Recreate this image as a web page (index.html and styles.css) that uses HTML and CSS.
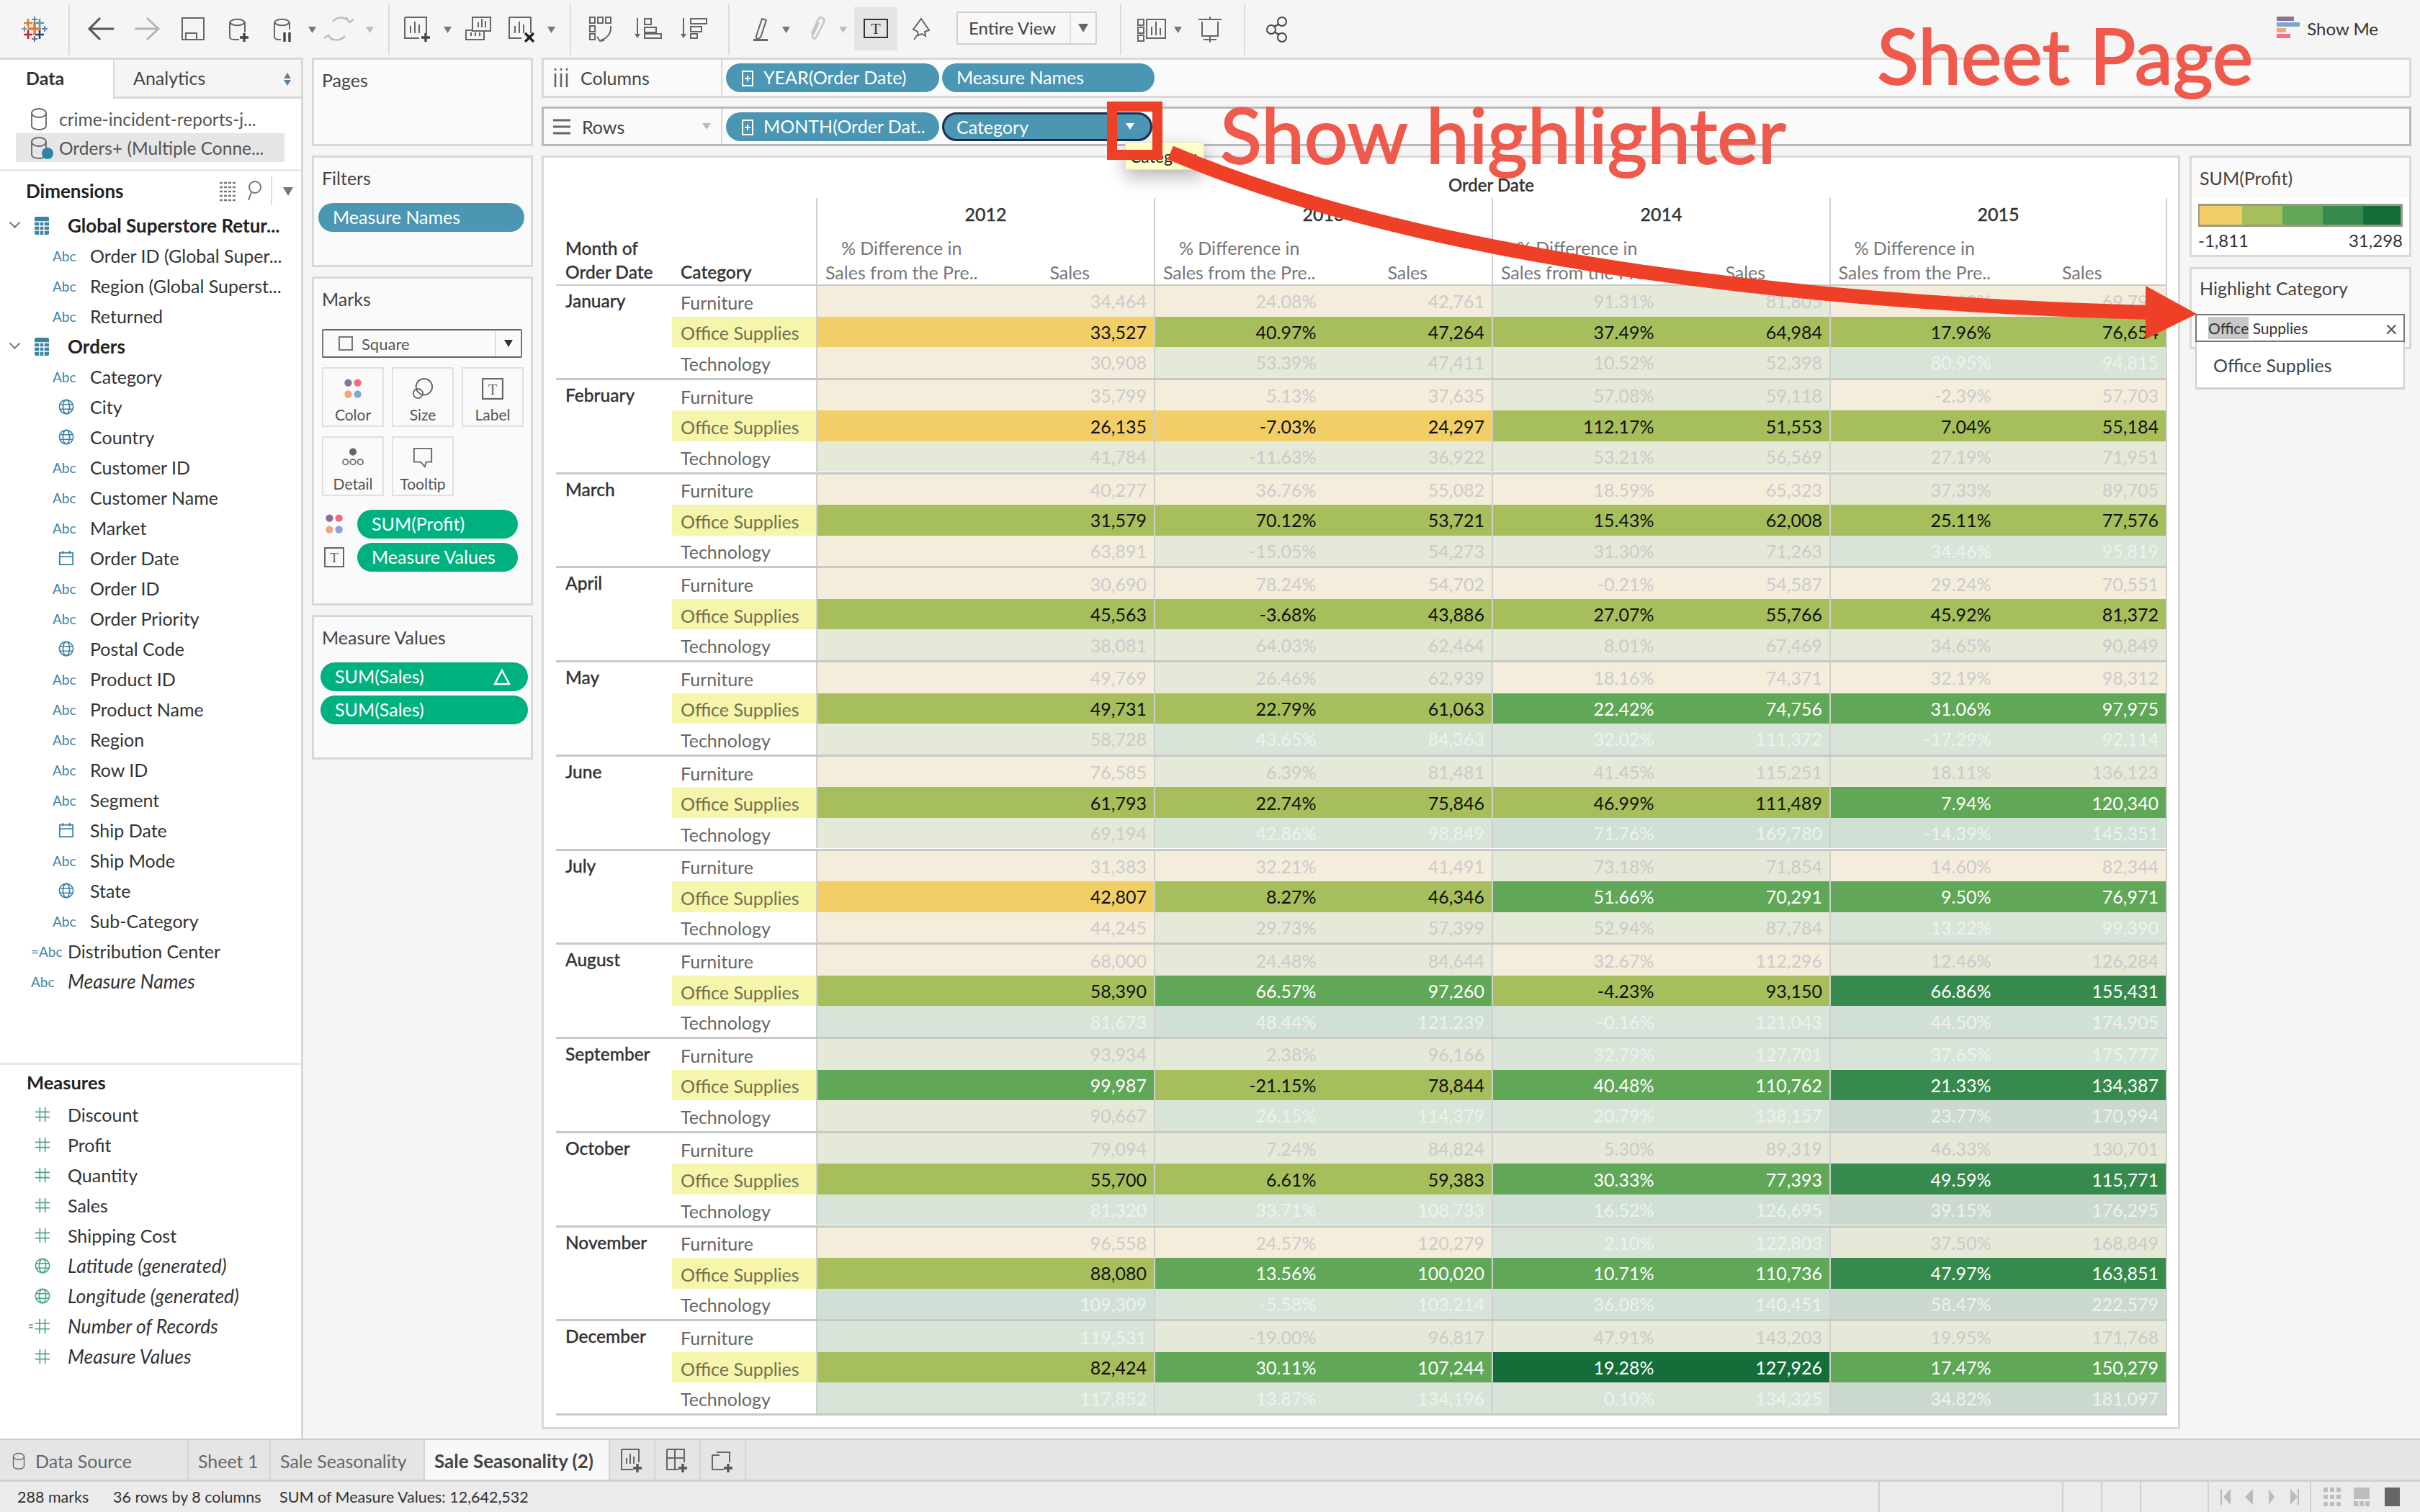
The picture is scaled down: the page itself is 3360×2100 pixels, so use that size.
FILE: index.html
```html
<!DOCTYPE html>
<html lang="en">
<head>
<meta charset="utf-8">
<title>Sale Seasonality (2)</title>
<link rel="stylesheet" href="styles.css">
</head>
<body>
<svg class="defs" width="0" height="0">
  <symbol id="globe" viewBox="0 0 24 24"><g fill="none" stroke="currentColor" stroke-width="1.8"><circle cx="12" cy="12" r="10.5"/><ellipse cx="12" cy="12" rx="5" ry="10.5"/><path d="M2 8.5h20M2 15.5h20"/></g></symbol>
  <symbol id="cal" viewBox="0 0 24 24"><g fill="none" stroke="currentColor" stroke-width="2"><rect x="2" y="4" width="20" height="18"/><path d="M2 10h20M7 1v5M17 1v5"/></g></symbol>
  <symbol id="hash" viewBox="0 0 24 24"><path fill="none" stroke="currentColor" stroke-width="1.8" d="M8 1v22M16 1v22M1 8h22M1 16h22"/></symbol>
  <symbol id="hashm" viewBox="0 0 32 24"><path fill="none" stroke="currentColor" stroke-width="1.8" d="M16 1v22M24 1v22M9 8h22M9 16h22"/><path fill="none" stroke="currentColor" stroke-width="2" d="M0 10h6M0 14h6"/></symbol>
  <symbol id="table" viewBox="0 0 20 26"><path fill="currentColor" d="M0 3a2 2 0 0 1 2-2h16a2 2 0 0 1 2 2v21a2 2 0 0 1-2 2H2a2 2 0 0 1-2-2z"/><path fill="none" stroke="#fff" stroke-width="1.5" d="M0 8h20M0 14h20M0 20h20M7 8v18M13 8v18"/></symbol>
  <symbol id="cyl" viewBox="0 0 24 32"><g fill="none" stroke="#666" stroke-width="1.8"><path d="M2 8a10 6 0 0 1 20 0v18a10 5 0 0 1-20 0z"/><path d="M2 8a10 6 0 0 0 20 0"/></g></symbol>
  <symbol id="dots" viewBox="0 0 26 32"><circle cx="6" cy="7" r="5.5" fill="#8a7198"/><circle cx="20" cy="7" r="5.5" fill="#f4697f"/><circle cx="6" cy="24" r="5.5" fill="#f1a67a"/><circle cx="20" cy="24" r="5.5" fill="#86a8d0"/></symbol>
</svg>

<div class="app">
  <header class="toolbar">
    <svg class="tb" width="95" height="80" viewBox="0 0 95 80">
      <g fill="none" stroke-width="2.6">
        <path stroke="#e8762c" stroke-width="3.4" d="M48 31v18M39 40h18"/>
        <path stroke="#e8762c" d="M39 26v12M33 32h12"/>
        <path stroke="#5b9aa8" d="M55 26v12M49 32h12"/>
        <path stroke="#c72035" d="M39 42v12M33 48h12"/>
        <path stroke="#1f447a" d="M55 42v12M49 48h12"/>
        <path stroke="#59879b" stroke-width="2" d="M48 23v8M44 27h8"/>
        <path stroke="#5b6f9a" stroke-width="2" d="M48 50v8M44 54h8"/>
        <path stroke="#7099a6" stroke-width="2" d="M34 36v8M30 40h8"/>
        <path stroke="#5a7fb0" stroke-width="2" d="M62 36v8M58 40h8"/>
      </g>
    </svg>
    <i class="sep"></i>
    <svg class="tb" width="442" height="80" viewBox="97 0 442 80">
      <path fill="none" stroke="#555" stroke-width="3" d="M139 25 124 40l15 15M126 40h32"/>
      <path fill="none" stroke="#b5b5b5" stroke-width="3" d="M204 25l16 15-16 15M187 40h32"/>
      <g fill="none" stroke="#666" stroke-width="2">
        <path d="M253 25h30v30h-30zM258 55v-9h15v9"/>
        <path d="M319 31a11 6 0 0 1 21 0v14M319 31a11 6 0 0 0 21 0M319 31v20a5 4 0 0 0 5 4h8"/>
        <path d="M381 31a11 6 0 0 1 21 0v10M381 31a11 6 0 0 0 21 0M381 31v20a5 4 0 0 0 5 4h4"/>
      </g>
      <path fill="none" stroke="#444" stroke-width="3.4" d="M339 46v12M333 52h12M395 45v13M402 45v13"/>
      <path fill="#777" d="M428 37h11l-5.500 9z"/>
      <g fill="none" stroke="#bdbdbd" stroke-width="2.400">
        <path d="M462 30a15 15 0 0 1 20-3l3 4M480 24l5 7 6-4M479 50a15 15 0 0 1-20 3l-3-4M461 56l-5-7-6 4"/>
      </g>
      <path fill="#bdbdbd" d="M508 37h11l-5.500 9z"/>
    </svg>
    <i class="sep"></i>
    <svg class="tb" width="250" height="80" viewBox="541 0 250 80">
      <g fill="none" stroke="#666" stroke-width="2">
        <path d="M562 24h30v22M582 53h-20V24M570 46V36M576 46V30M582 46V34"/>
        <path d="M656 24h25v19h-25zM664 38v-7M669 38V26M674 38v-9M656 42h-9v13h25v-12M654 50v-5M660 50v-5M666 50v-5"/>
        <path d="M707 24h30v22M724 53h-17V24M715 46V36M721 46V30M727 46V34"/>
      </g>
      <path fill="none" stroke="#444" stroke-width="3.400" d="M591 46v12M585 52h12"/>
      <path fill="none" stroke="#222" stroke-width="3.400" d="M729 46l12 12M741 46l-12 12"/>
      <path fill="#777" d="M616 37h11l-5.500 9zM760 37h11l-5.500 9z"/>
    </svg>
    <i class="sep"></i>
    <svg class="tb" width="218" height="80" viewBox="793 0 218 80">
      <g fill="none" stroke="#666" stroke-width="2">
        <path d="M819 24h7v8h-7zM830 24h7v8h-7zM841 24h7v8h-7zM819 36h7v8h-7zM819 47h7v8h-7zM848 36c1 9-4 17-14 20M829 51l4 6 6-1"/>
        <path d="M895 26h9v8h-9zM895 38h16v7h-16zM895 47h23v6h-23zM885 25v25"/>
        <path d="M959 26h22v7h-22zM959 37h15v7h-15zM959 47h9v6h-9zM949 25v25"/>
      </g>
      <path fill="#666" d="M881 47h8l-4 6zM945 47h8l-4 6z"/>
    </svg>
    <i class="sep"></i>
    <svg class="tb" width="315" height="80" viewBox="1013 0 315 80">
      <path fill="none" stroke="#666" stroke-width="2" d="M1050 50l8-24 6 2-8 24-6 3z"/>
      <path fill="#666" d="M1046 54h20v3h-20z"/>
      <path fill="#777" d="M1086 37h11l-5.500 9z"/>
      <path fill="none" stroke="#c4c4c4" stroke-width="2.400" d="M1127 47l9-20c3-5 10-2 8 4l-11 21c-2 3-6 1-5-2l9-19"/>
      <path fill="#bdbdbd" d="M1165 37h11l-5.500 9z"/>
      <rect x="1186" y="10" width="60" height="60" fill="#e5e5e5"/>
      <rect x="1200" y="27" width="32" height="25" fill="none" stroke="#333" stroke-width="2"/>
      <text x="1216" y="47" text-anchor="middle" font-family="Liberation Serif, serif" font-size="22" fill="#333">T</text>
      <path fill="none" stroke="#666" stroke-width="2" d="M1279 26l11 16-6 2 1 6-5-3-5 2-1-5-6-3zM1275 47l-6 8"/>
    </svg>
    <div class="fit"><span class="fit-l">Entire View</span><span class="fit-r"><i class="tri"></i></span></div>
    <i class="sep sep-fit"></i>
    <svg class="tb" width="170" height="80" viewBox="1557 0 170 80">
      <g fill="none" stroke="#666" stroke-width="2">
        <path d="M1580 27h8v8h-8zM1580 38h8v8h-8zM1580 49h8v8h-8zM1592 27h26v26h-26zM1599 49V37M1605 49V30M1611 49V39"/>
        <path d="M1664 27h32M1669 30v20h22V30M1680 50v9M1671 55h18M1680 23v4"/>
      </g>
      <path fill="#777" d="M1630 37h11l-5.500 9z"/>
    </svg>
    <i class="sep"></i>
    <svg class="tb" width="70" height="80" viewBox="1729 0 70 80">
      <g fill="none" stroke="#444" stroke-width="2"><circle cx="1780" cy="30" r="6"/><circle cx="1765" cy="41" r="6"/><circle cx="1780" cy="52" r="6"/><path d="M1775 34l-6 3M1770 45l6 3"/></g>
    </svg>
    <div class="showme">
      <svg width="32" height="32" viewBox="0 0 32 32"><path fill="#8a7198" d="M0 0h24v6H0z"/><path fill="#7fa5cc" d="M0 8h32v6H0z"/><path fill="#f1a67a" d="M0 16h13v6H0z"/><path fill="#f4718a" d="M0 24h19v6H0z"/></svg>
      <span>Show Me</span>
    </div>
  </header>

  <main class="main">
    <aside class="side">
      <div class="tabs2">
        <div class="tab2 on">Data</div>
        <div class="tab2 off">Analytics<i class="updown"></i></div>
      </div>
      <div class="sources">
        <div class="src"><svg class="cy"><use href="#cyl"/></svg>crime-incident-reports-j...</div>
        <div class="src cur"><svg class="cy"><use href="#cyl"/></svg><i class="check"></i>Orders+ (Multiple Conne...</div>
      </div>
      <div class="dims">
        <div class="dims-h">
          <b>Dimensions</b>
          <svg class="dh" width="104" height="40" viewBox="0 0 104 40">
            <path fill="none" stroke="#777" stroke-width="2.500" stroke-dasharray="4 2" d="M1 9h24M1 15h24M1 21h24M1 27h24M1 33h24"/>
            <g fill="none" stroke="#777" stroke-width="2"><circle cx="50" cy="15" r="8"/><path d="M45 22l-4 11"/></g>
            <path stroke="#ddd" stroke-width="2" d="M73 0v40"/>
            <path fill="#777" d="M89 15h14l-7 12z"/>
          </svg>
        </div>
        <div class="g"><i class="chev"></i><svg class="ti"><use href="#table"/></svg><b>Global Superstore Retur...</b></div>
        <div class="f"><span class="abc">Abc</span>Order ID (Global Super...</div>
        <div class="f"><span class="abc">Abc</span>Region (Global Superst...</div>
        <div class="f"><span class="abc">Abc</span>Returned</div>
        <div class="g"><i class="chev"></i><svg class="ti"><use href="#table"/></svg><b>Orders</b></div>
        <div class="f"><span class="abc">Abc</span>Category</div>
        <div class="f"><svg class="gl"><use href="#globe"/></svg>City</div>
        <div class="f"><svg class="gl"><use href="#globe"/></svg>Country</div>
        <div class="f"><span class="abc">Abc</span>Customer ID</div>
        <div class="f"><span class="abc">Abc</span>Customer Name</div>
        <div class="f"><span class="abc">Abc</span>Market</div>
        <div class="f"><svg class="gl"><use href="#cal"/></svg>Order Date</div>
        <div class="f"><span class="abc">Abc</span>Order ID</div>
        <div class="f"><span class="abc">Abc</span>Order Priority</div>
        <div class="f"><svg class="gl"><use href="#globe"/></svg>Postal Code</div>
        <div class="f"><span class="abc">Abc</span>Product ID</div>
        <div class="f"><span class="abc">Abc</span>Product Name</div>
        <div class="f"><span class="abc">Abc</span>Region</div>
        <div class="f"><span class="abc">Abc</span>Row ID</div>
        <div class="f"><span class="abc">Abc</span>Segment</div>
        <div class="f"><svg class="gl"><use href="#cal"/></svg>Ship Date</div>
        <div class="f"><span class="abc">Abc</span>Ship Mode</div>
        <div class="f"><svg class="gl"><use href="#globe"/></svg>State</div>
        <div class="f"><span class="abc">Abc</span>Sub-Category</div>
        <div class="f top"><span class="abc">=Abc</span>Distribution Center</div>
        <div class="f top"><span class="abc">Abc</span><em>Measure Names</em></div>
      </div>
      <div class="meas">
        <div class="meas-h"><b>Measures</b></div>
        <div class="m"><svg class="ha"><use href="#hash"/></svg>Discount</div>
        <div class="m"><svg class="ha"><use href="#hash"/></svg>Profit</div>
        <div class="m"><svg class="ha"><use href="#hash"/></svg>Quantity</div>
        <div class="m"><svg class="ha"><use href="#hash"/></svg>Sales</div>
        <div class="m"><svg class="ha"><use href="#hash"/></svg>Shipping Cost</div>
        <div class="m"><svg class="ha"><use href="#globe"/></svg><em>Latitude (generated)</em></div>
        <div class="m"><svg class="ha"><use href="#globe"/></svg><em>Longitude (generated)</em></div>
        <div class="m"><svg class="hm"><use href="#hashm"/></svg><em>Number of Records</em></div>
        <div class="m"><svg class="ha"><use href="#hash"/></svg><em>Measure Values</em></div>
      </div>
    </aside>

    <section class="cards">
      <div class="card c-pages"><div class="ct">Pages</div></div>
      <div class="card c-filters"><div class="ct">Filters</div><div class="pill blue wide">Measure Names</div></div>
      <div class="card c-marks">
        <div class="ct">Marks</div>
        <div class="marktype"><span class="sq"></span><span class="mt-l">Square</span><span class="mt-r"><i class="tri small"></i></span></div>
        <div class="mbtns">
          <div class="mbtn"><svg class="mi" viewBox="0 0 26 32"><use href="#dots"/></svg>Color</div>
          <div class="mbtn"><svg class="mi" viewBox="0 0 30 32" fill="none" stroke="#666" stroke-width="2"><circle cx="17" cy="13" r="12"/><circle cx="8" cy="23" r="7"/></svg>Size</div>
          <div class="mbtn"><svg class="mi" viewBox="0 0 28 28"><rect x="1" y="1" width="26" height="26" fill="none" stroke="#666" stroke-width="2"/><text x="14" y="21" text-anchor="middle" font-family="Liberation Serif, serif" font-size="19" fill="#666">T</text></svg>Label</div>
          <div class="mbtn"><svg class="mi" viewBox="0 0 32 32" fill="none" stroke="#666" stroke-width="1.800"><circle cx="16" cy="7" r="4.500" fill="#666"/><circle cx="5" cy="22" r="4"/><circle cx="16" cy="22" r="4"/><circle cx="27" cy="22" r="4"/></svg>Detail</div>
          <div class="mbtn"><svg class="mi" viewBox="0 0 30 32" fill="none" stroke="#666" stroke-width="2"><path d="M2 2h26v20h-8l-2 7-6-7H2z"/></svg>Tooltip</div>
        </div>
        <div class="enc"><svg class="ei"><use href="#dots"/></svg><div class="pill green">SUM(Profit)</div></div>
        <div class="enc"><svg class="ei" viewBox="0 0 28 28"><rect x="1" y="1" width="26" height="26" fill="none" stroke="#666" stroke-width="2"/><text x="14" y="21" text-anchor="middle" font-family="Liberation Serif, serif" font-size="19" fill="#666">T</text></svg><div class="pill green">Measure Values</div></div>
      </div>
      <div class="card c-mv">
        <div class="ct">Measure Values</div>
        <div class="pill green wide delta">SUM(Sales)<svg width="24" height="24" viewBox="0 0 24 24"><path fill="none" stroke="#fff" stroke-width="2.400" d="M12 3 22 22H2z"/></svg></div>
        <div class="pill green wide">SUM(Sales)</div>
      </div>
    </section>

    <section class="work">
      <div class="shelf">
        <div class="sh-l"><svg width="22" height="26" viewBox="0 0 22 26"><path fill="none" stroke="#666" stroke-width="2.600" d="M3 0v3M11 0v3M19 0v3M3 7v19M11 7v19M19 7v19"/></svg>Columns</div>
        <div class="pill blue p1"><i class="plus"></i>YEAR(Order Date)</div>
        <div class="pill blue p2">Measure Names</div>
      </div>
      <div class="shelf dark">
        <div class="sh-l"><svg width="24" height="22" viewBox="0 0 24 22"><path fill="none" stroke="#666" stroke-width="3" d="M0 2h24M0 11h24M0 20h24"/></svg>Rows<i class="tri light"></i></div>
        <div class="pill blue p1"><i class="plus"></i>MONTH(Order Dat..</div>
        <div class="pill blue p2 sel">Category<i class="tri-w"></i></div>
      </div>
      <div class="lower">
        <div class="viz">
          <div class="od">Order Date</div>
          <div class="thead">
            <div class="th-l"><span>Month of<br>Order Date</span></div>
            <div class="th-l th-c"><span>Category</span></div>
            <div class="yr"><b>2012</b><div class="yh"><span>% Difference in<br>Sales from the Pre..</span><span>Sales</span></div></div>
            <div class="yr"><b>2013</b><div class="yh"><span>% Difference in<br>Sales from the Pre..</span><span>Sales</span></div></div>
            <div class="yr"><b>2014</b><div class="yh"><span>% Difference in<br>Sales from the Pre..</span><span>Sales</span></div></div>
            <div class="yr last"><b>2015</b><div class="yh"><span>% Difference in<br>Sales from the Pre..</span><span>Sales</span></div></div>
          </div>
          <div class="tbody">
            <div class="mo"><div class="mn">January</div><div class="rs">
              <div class="r"><div class="cat">Furniture</div><div class="p t0"><span></span><span>34,464</span></div><div class="p t0"><span>24.08%</span><span>42,761</span></div><div class="p t1"><span>91.31%</span><span>81,805</span></div><div class="p t0"><span>14.69%</span><span>69,795</span></div></div>
              <div class="r"><div class="cat hl">Office Supplies</div><div class="p h0"><span></span><span>33,527</span></div><div class="p h1"><span>40.97%</span><span>47,264</span></div><div class="p h1"><span>37.49%</span><span>64,984</span></div><div class="p h1"><span>17.96%</span><span>76,654</span></div></div>
              <div class="r"><div class="cat">Technology</div><div class="p t0"><span></span><span>30,908</span></div><div class="p t1"><span>53.39%</span><span>47,411</span></div><div class="p t1"><span>10.52%</span><span>52,398</span></div><div class="p t2"><span>80.95%</span><span>94,815</span></div></div>
            </div></div>
            <div class="mo"><div class="mn">February</div><div class="rs">
              <div class="r"><div class="cat">Furniture</div><div class="p t0"><span></span><span>35,799</span></div><div class="p t0"><span>5.13%</span><span>37,635</span></div><div class="p t1"><span>57.08%</span><span>59,118</span></div><div class="p t0"><span>-2.39%</span><span>57,703</span></div></div>
              <div class="r"><div class="cat hl">Office Supplies</div><div class="p h0"><span></span><span>26,135</span></div><div class="p h0"><span>-7.03%</span><span>24,297</span></div><div class="p h1"><span>112.17%</span><span>51,553</span></div><div class="p h1"><span>7.04%</span><span>55,184</span></div></div>
              <div class="r"><div class="cat">Technology</div><div class="p t1"><span></span><span>41,784</span></div><div class="p t1"><span>-11.63%</span><span>36,922</span></div><div class="p t1"><span>53.21%</span><span>56,569</span></div><div class="p t1"><span>27.19%</span><span>71,951</span></div></div>
            </div></div>
            <div class="mo"><div class="mn">March</div><div class="rs">
              <div class="r"><div class="cat">Furniture</div><div class="p t0"><span></span><span>40,277</span></div><div class="p t0"><span>36.76%</span><span>55,082</span></div><div class="p t0"><span>18.59%</span><span>65,323</span></div><div class="p t1"><span>37.33%</span><span>89,705</span></div></div>
              <div class="r"><div class="cat hl">Office Supplies</div><div class="p h1"><span></span><span>31,579</span></div><div class="p h1"><span>70.12%</span><span>53,721</span></div><div class="p h1"><span>15.43%</span><span>62,008</span></div><div class="p h1"><span>25.11%</span><span>77,576</span></div></div>
              <div class="r"><div class="cat">Technology</div><div class="p t0"><span></span><span>63,891</span></div><div class="p t1"><span>-15.05%</span><span>54,273</span></div><div class="p t1"><span>31.30%</span><span>71,263</span></div><div class="p t2"><span>34.46%</span><span>95,819</span></div></div>
            </div></div>
            <div class="mo"><div class="mn">April</div><div class="rs">
              <div class="r"><div class="cat">Furniture</div><div class="p t0"><span></span><span>30,690</span></div><div class="p t0"><span>78.24%</span><span>54,702</span></div><div class="p t0"><span>-0.21%</span><span>54,587</span></div><div class="p t0"><span>29.24%</span><span>70,551</span></div></div>
              <div class="r"><div class="cat hl">Office Supplies</div><div class="p h1"><span></span><span>45,563</span></div><div class="p h1"><span>-3.68%</span><span>43,886</span></div><div class="p h1"><span>27.07%</span><span>55,766</span></div><div class="p h1"><span>45.92%</span><span>81,372</span></div></div>
              <div class="r"><div class="cat">Technology</div><div class="p t1"><span></span><span>38,081</span></div><div class="p t1"><span>64.03%</span><span>62,464</span></div><div class="p t1"><span>8.01%</span><span>67,469</span></div><div class="p t1"><span>34.65%</span><span>90,849</span></div></div>
            </div></div>
            <div class="mo"><div class="mn">May</div><div class="rs">
              <div class="r"><div class="cat">Furniture</div><div class="p t0"><span></span><span>49,769</span></div><div class="p t1"><span>26.46%</span><span>62,939</span></div><div class="p t0"><span>18.16%</span><span>74,371</span></div><div class="p t0"><span>32.19%</span><span>98,312</span></div></div>
              <div class="r"><div class="cat hl">Office Supplies</div><div class="p h1"><span></span><span>49,731</span></div><div class="p h1"><span>22.79%</span><span>61,063</span></div><div class="p h2"><span>22.42%</span><span>74,756</span></div><div class="p h2"><span>31.06%</span><span>97,975</span></div></div>
              <div class="r"><div class="cat">Technology</div><div class="p t1"><span></span><span>58,728</span></div><div class="p t2"><span>43.65%</span><span>84,363</span></div><div class="p t2"><span>32.02%</span><span>111,372</span></div><div class="p t2"><span>-17.29%</span><span>92,114</span></div></div>
            </div></div>
            <div class="mo"><div class="mn">June</div><div class="rs">
              <div class="r"><div class="cat">Furniture</div><div class="p t0"><span></span><span>76,585</span></div><div class="p t1"><span>6.39%</span><span>81,481</span></div><div class="p t1"><span>41.45%</span><span>115,251</span></div><div class="p t1"><span>18.11%</span><span>136,123</span></div></div>
              <div class="r"><div class="cat hl">Office Supplies</div><div class="p h1"><span></span><span>61,793</span></div><div class="p h1"><span>22.74%</span><span>75,846</span></div><div class="p h1"><span>46.99%</span><span>111,489</span></div><div class="p h2"><span>7.94%</span><span>120,340</span></div></div>
              <div class="r"><div class="cat">Technology</div><div class="p t1"><span></span><span>69,194</span></div><div class="p t2"><span>42.86%</span><span>98,849</span></div><div class="p t3"><span>71.76%</span><span>169,780</span></div><div class="p t3"><span>-14.39%</span><span>145,351</span></div></div>
            </div></div>
            <div class="mo"><div class="mn">July</div><div class="rs">
              <div class="r"><div class="cat">Furniture</div><div class="p t0"><span></span><span>31,383</span></div><div class="p t0"><span>32.21%</span><span>41,491</span></div><div class="p t1"><span>73.18%</span><span>71,854</span></div><div class="p t0"><span>14.60%</span><span>82,344</span></div></div>
              <div class="r"><div class="cat hl">Office Supplies</div><div class="p h0"><span></span><span>42,807</span></div><div class="p h1"><span>8.27%</span><span>46,346</span></div><div class="p h2"><span>51.66%</span><span>70,291</span></div><div class="p h2"><span>9.50%</span><span>76,971</span></div></div>
              <div class="r"><div class="cat">Technology</div><div class="p t0"><span></span><span>44,245</span></div><div class="p t1"><span>29.73%</span><span>57,399</span></div><div class="p t1"><span>52.94%</span><span>87,784</span></div><div class="p t2"><span>13.22%</span><span>99,390</span></div></div>
            </div></div>
            <div class="mo"><div class="mn">August</div><div class="rs">
              <div class="r"><div class="cat">Furniture</div><div class="p t0"><span></span><span>68,000</span></div><div class="p t1"><span>24.48%</span><span>84,644</span></div><div class="p t0"><span>32.67%</span><span>112,296</span></div><div class="p t1"><span>12.46%</span><span>126,284</span></div></div>
              <div class="r"><div class="cat hl">Office Supplies</div><div class="p h1"><span></span><span>58,390</span></div><div class="p h2"><span>66.57%</span><span>97,260</span></div><div class="p h1"><span>-4.23%</span><span>93,150</span></div><div class="p h3"><span>66.86%</span><span>155,431</span></div></div>
              <div class="r"><div class="cat">Technology</div><div class="p t2"><span></span><span>81,673</span></div><div class="p t3"><span>48.44%</span><span>121,239</span></div><div class="p t2"><span>-0.16%</span><span>121,043</span></div><div class="p t3"><span>44.50%</span><span>174,905</span></div></div>
            </div></div>
            <div class="mo"><div class="mn">September</div><div class="rs">
              <div class="r"><div class="cat">Furniture</div><div class="p t1"><span></span><span>93,934</span></div><div class="p t1"><span>2.38%</span><span>96,166</span></div><div class="p t2"><span>32.79%</span><span>127,701</span></div><div class="p t2"><span>37.65%</span><span>175,777</span></div></div>
              <div class="r"><div class="cat hl">Office Supplies</div><div class="p h2"><span></span><span>99,987</span></div><div class="p h1"><span>-21.15%</span><span>78,844</span></div><div class="p h2"><span>40.48%</span><span>110,762</span></div><div class="p h3"><span>21.33%</span><span>134,387</span></div></div>
              <div class="r"><div class="cat">Technology</div><div class="p t1"><span></span><span>90,667</span></div><div class="p t2"><span>26.15%</span><span>114,379</span></div><div class="p t2"><span>20.79%</span><span>138,157</span></div><div class="p t4"><span>23.77%</span><span>170,994</span></div></div>
            </div></div>
            <div class="mo"><div class="mn">October</div><div class="rs">
              <div class="r"><div class="cat">Furniture</div><div class="p t1"><span></span><span>79,094</span></div><div class="p t1"><span>7.24%</span><span>84,824</span></div><div class="p t1"><span>5.30%</span><span>89,319</span></div><div class="p t1"><span>46.33%</span><span>130,701</span></div></div>
              <div class="r"><div class="cat hl">Office Supplies</div><div class="p h1"><span></span><span>55,700</span></div><div class="p h1"><span>6.61%</span><span>59,383</span></div><div class="p h2"><span>30.33%</span><span>77,393</span></div><div class="p h3"><span>49.59%</span><span>115,771</span></div></div>
              <div class="r"><div class="cat">Technology</div><div class="p t2"><span></span><span>81,320</span></div><div class="p t2"><span>33.71%</span><span>108,733</span></div><div class="p t3"><span>16.52%</span><span>126,695</span></div><div class="p t4"><span>39.15%</span><span>176,295</span></div></div>
            </div></div>
            <div class="mo"><div class="mn">November</div><div class="rs">
              <div class="r"><div class="cat">Furniture</div><div class="p t0"><span></span><span>96,558</span></div><div class="p t0"><span>24.57%</span><span>120,279</span></div><div class="p t2"><span>2.10%</span><span>122,803</span></div><div class="p t1"><span>37.50%</span><span>168,849</span></div></div>
              <div class="r"><div class="cat hl">Office Supplies</div><div class="p h1"><span></span><span>88,080</span></div><div class="p h2"><span>13.56%</span><span>100,020</span></div><div class="p h2"><span>10.71%</span><span>110,736</span></div><div class="p h3"><span>47.97%</span><span>163,851</span></div></div>
              <div class="r"><div class="cat">Technology</div><div class="p t3"><span></span><span>109,309</span></div><div class="p t2"><span>-5.58%</span><span>103,214</span></div><div class="p t3"><span>36.08%</span><span>140,451</span></div><div class="p t4"><span>58.47%</span><span>222,579</span></div></div>
            </div></div>
            <div class="mo"><div class="mn">December</div><div class="rs">
              <div class="r"><div class="cat">Furniture</div><div class="p t2"><span></span><span>119,531</span></div><div class="p t1"><span>-19.00%</span><span>96,817</span></div><div class="p t1"><span>47.91%</span><span>143,203</span></div><div class="p t1"><span>19.95%</span><span>171,768</span></div></div>
              <div class="r"><div class="cat hl">Office Supplies</div><div class="p h1"><span></span><span>82,424</span></div><div class="p h2"><span>30.11%</span><span>107,244</span></div><div class="p h4"><span>19.28%</span><span>127,926</span></div><div class="p h2"><span>17.47%</span><span>150,279</span></div></div>
              <div class="r"><div class="cat">Technology</div><div class="p t2"><span></span><span>117,852</span></div><div class="p t2"><span>13.87%</span><span>134,196</span></div><div class="p t2"><span>0.10%</span><span>134,325</span></div><div class="p t4"><span>34.82%</span><span>181,097</span></div></div>
            </div></div>
          </div>
        </div>
        <div class="legends">
          <div class="card lg1">
            <div class="lt">SUM(Profit)</div>
            <div class="lb">
              <div class="ramp"><i class="r0"></i><i class="r1"></i><i class="r2"></i><i class="r3"></i><i class="r4"></i></div>
              <div class="rv"><span>-1,811</span><span>31,298</span></div>
            </div>
          </div>
          <div class="card lg2">
            <div class="lt">Highlight Category</div>
            <div class="hinput"><span><mark>Office</mark> Supplies</span><span class="x">×</span></div>
            <div class="hdrop">Office Supplies</div>
          </div>
        </div>
      </div>
    </section>
  </main>

  <nav class="sheets">
    <div class="st st-ds"><svg class="cy2"><use href="#cyl"/></svg>Data Source</div>
    <div class="st st-1">Sheet 1</div>
    <div class="st st-2">Sale Seasonality</div>
    <div class="st st-3">Sale Seasonality (2)</div>
    <div class="st st-i"><svg width="32" height="36" viewBox="0 0 32 36"><g fill="none" stroke="#666" stroke-width="2"><path d="M2 2h24v18M18 30H2V2M9 22v-8M14 22V8M19 22V12"/></g><path fill="none" stroke="#555" stroke-width="3.400" d="M24 22v12M18 28h12"/></svg></div>
    <div class="st st-i"><svg width="32" height="36" viewBox="0 0 32 36"><g fill="none" stroke="#666" stroke-width="2"><path d="M2 2h24v18M18 30H2V2M2 14h24M13 2v28"/></g><path fill="none" stroke="#555" stroke-width="3.400" d="M24 22v12M18 28h12"/></svg></div>
    <div class="st st-i"><svg width="32" height="36" viewBox="0 0 32 36"><g fill="none" stroke="#666" stroke-width="2"><path d="M8 6h18v14M18 30H2V10M2 10h10"/></g><path fill="none" stroke="#555" stroke-width="3.400" d="M24 22v12M18 28h12"/></svg></div>
  </nav>
  <footer class="status">
    <span class="s1">288 marks</span><span class="s2">36 rows by 8 columns</span><span class="s3">SUM of Measure Values: 12,642,532</span>
    <span class="spc"></span>
    <i class="sb w255"></i><i class="sb w54"></i><i class="sb w54"></i><i class="sb w94"></i>
    <i class="sb w142"><svg width="110" height="26" viewBox="0 0 110 26"><path fill="#bbb" d="M0 2h2v22H0zM14 2v22L4 13zM45 2v22L34 13zM67 2v22l8-11zM97 2v22l10-11zM107 2h2v22h-2z"/></svg></i>
    <i class="sb vw"><svg width="106" height="26" viewBox="0 0 106 26"><g fill="#bdbdbd"><path d="M0 0h6v6H0zM9 0h6v6H9zM18 0h6v6h-6zM0 10h6v6H0zM9 10h6v6H9zM18 10h6v6h-6zM0 20h6v6H0zM9 20h6v6H9zM18 20h6v6h-6z"/><path d="M42 0h22v16H42zM42 19h6v7h-6zM50 19h6v7h-6zM58 19h6v7h-6z"/></g><path fill="#666" d="M85 0h21v26H85z"/></svg></i>
  </footer>

  <div class="note n-sheet">Sheet Page</div>
  <div class="note n-high">Show highlighter</div>
  <div class="tooltip">Category</div>
  <div class="redbox"></div>
  <svg class="arrow" width="1460" height="300" viewBox="1600 190 1460 300">
    <path fill="none" stroke="#ee4026" stroke-width="20" d="M1625 212C1950 350 2450 420 2985 434"/>
    <path fill="#ee4026" d="M2979 397 3050 436 2979 471z"/>
  </svg>
</div>
</body>
</html>
```
FILE: styles.css
```css
* { box-sizing: border-box; }
html, body { margin: 0; height: 100%; }
body { font-family: "Lato", "Open Sans", sans-serif; font-size: 25px; color: #333; background: #f5f5f5; overflow: hidden; }
i, em { font-style: normal; }
em { font-style: italic; font-size: 26.500px; }
.defs { position: absolute; }

.app { position: relative; width: 3360px; height: 2100px; display: flex; flex-direction: column; }

/* toolbar */
.toolbar { height: 80px; flex: none; display: flex; align-items: stretch; background: #f5f5f5; }
.tb { display: block; flex: none; }
.sep { width: 2px; flex: none; margin: 6px 0 4px; background: #dcdcdc; }
.sep-fit { margin-left: 32px; }
.fit { flex: none; width: 195px; height: 46px; margin: 16px 0 0; display: flex; border: 2px solid #d0d0d0; border-radius: 2px; background: #f8f8f8; font-size: 24px; }
.fit-l { flex: 1; padding-left: 15px; line-height: 42px; color: #444; }
.fit-r { width: 36px; border-left: 2px solid #ddd; display: flex; align-items: center; justify-content: center; }
.tri { display: block; width: 0; height: 0; border-left: 7px solid transparent; border-right: 7px solid transparent; border-top: 12px solid #666; }
.tri.small { border-left-width: 6px; border-right-width: 6px; border-top-width: 10px; border-top-color: #333; }
.tri.light { border-top-color: #bbb; border-left-width: 6px; border-right-width: 6px; border-top-width: 9px; margin-left: auto; margin-right: 14px; }
.showme { margin-left: auto; margin-right: 58px; padding-bottom: 2px; display: flex; align-items: center; gap: 10px; font-size: 24px; color: #333; }

/* main grid */
.main { flex: 1; min-height: 0; display: flex; align-items: stretch; }

/* side pane */
.side { width: 421px; flex: none; background: #fff; border-right: 3px solid #d8d8d8; border-top: 3px solid #d8d8d8; display: flex; flex-direction: column; }
.tabs2 { height: 54px; flex: none; display: flex; }
.tab2 { line-height: 50px; }
.tab2.on { width: 157px; padding-left: 36px; font-weight: 700; color: #333; }
.tab2.off { flex: 1; padding-left: 26px; background: #f5f5f5; color: #444; border-left: 2px solid #d8d8d8; border-bottom: 3px solid #d8d8d8; position: relative; }
.updown { position: absolute; right: 14px; top: 18px; width: 0; height: 0; border-left: 5px solid transparent; border-right: 5px solid transparent; border-bottom: 8px solid #778; }
.updown::after { content: ""; position: absolute; left: -5px; top: 10px; border-left: 5px solid transparent; border-right: 5px solid transparent; border-top: 8px solid #5a7ea8; }
.sources { height: 101px; flex: none; padding: 8px 23px 0 22px; border-bottom: 3px solid #e8e8e8; }
.src { height: 40px; display: flex; align-items: center; font-size: 24.500px; color: #555; position: relative; }
.src.cur { background: #e6e6e6; }
.cy { width: 24px; height: 32px; margin: 0 16px 0 20px; flex: none; }
.check { position: absolute; left: 36px; top: 20px; width: 16px; height: 16px; border-radius: 50%; background: #2f83a8; }
.dims { flex: 1; min-height: 0; border-bottom: 3px solid #e8e8e8; }
.dims-h { height: 54px; display: flex; align-items: center; padding-left: 36px; position: relative; }
.dims-h b { font-weight: 700; color: #222; font-size: 26px; }
.dh { margin-left: auto; margin-right: 10px; }
.g { height: 42px; display: flex; align-items: center; padding-left: 15px; color: #222; }
.g b { font-weight: 700; font-size: 26px; white-space: nowrap; }
.chev { width: 11px; height: 11px; border-right: 2px solid #777; border-bottom: 2px solid #777; transform: rotate(45deg) translate(-3px,-3px); margin-right: 22px; flex: none; }
.ti { width: 20px; height: 26px; color: #3f84a3; margin-right: 26px; flex: none; }
.f { height: 42px; display: flex; align-items: center; padding-left: 73px; color: #333; white-space: nowrap; }
.f.top { padding-left: 43px; }
.abc { width: 52px; flex: none; font-size: 19px; color: #3f84a3; }
.f.top .abc { width: 51px; }
.gl { width: 52px; height: 24px; flex: none; color: #3f84a3; padding-right: 22px; padding-left: 8px; }
.meas { flex: none; height: 519px; }
.meas-h { height: 48px; display: flex; align-items: center; padding-left: 37px; color: #222; }
.meas-h b { font-weight: 700; font-size: 25.500px; }
.m { height: 42px; display: flex; align-items: center; padding-left: 48px; color: #333; white-space: nowrap; }
.ha { width: 22px; height: 24px; color: #4ca77f; margin-right: 24px; flex: none; }
.hm { width: 30px; height: 24px; color: #4ca77f; margin-left: -8px; margin-right: 24px; flex: none; }

/* middle cards */
.cards { width: 319px; flex: none; padding-left: 12px; display: flex; flex-direction: column; gap: 13px; }
.card { background: #fafafa; border: 3px solid #d8d8d8; }
.c-pages { height: 123px; }
.c-filters { height: 155px; }
.c-marks { height: 457px; }
.c-mv { height: 201px; }
.ct { padding: 10px 0 0 11px; height: 54px; color: #444; line-height: 36px; }
.c-filters .ct { height: 63px; }
.c-marks .ct { height: 70px; }
.c-mv .ct { height: 63px; }
.pill { height: 40px; border-radius: 20px; color: #fff; line-height: 38px; padding-left: 20px; white-space: nowrap; position: relative; font-size: 25px; }
.blue { background: #4a96b3; }
.green { background: #00b180; }
.wide { margin: 0 9px 0 6px; }
.c-mv .wide { margin: 0 4px 6px 9px; }
.delta svg { position: absolute; right: 24px; top: 8px; }
.marktype { height: 40px; margin: 0 12px 13px 11px; display: flex; align-items: center; border: 2px solid #e0e0e0; border-top-color: #666; border-bottom-color: #666; border-left-color: #777; border-right-color: #777; border-radius: 2px; background: #fafafa; font-size: 22px; color: #555; }
.sq { width: 20px; height: 20px; border: 2px solid #777; margin: 0 12px 0 21px; }
.mt-l { flex: 1; }
.mt-r { width: 36px; border-left: 2px solid #ddd; height: 100%; display: flex; align-items: center; justify-content: center; }
.mbtns { display: grid; grid-template-columns: repeat(3, 86px); grid-auto-rows: 83px; column-gap: 11px; row-gap: 13px; padding-left: 11px; }
.mbtn { border: 2px solid #e0e0e0; display: flex; flex-direction: column; align-items: center; font-size: 21px; color: #555; padding-top: 13px; gap: 8px; }
.mi { width: 32px; height: 30px; flex: none; }
.enc { display: flex; align-items: center; margin-top: 6px; padding-left: 14px; gap: 18px; }
.mbtns + .enc { margin-top: 19px; }
.enc .pill { width: 223px; padding-left: 20px; }
.ei { width: 28px; height: 30px; flex: none; }

/* work */
.work { flex: 1; min-width: 0; padding: 0 12px 0 12px; display: flex; flex-direction: column; }
.shelf { height: 56px; flex: none; display: flex; align-items: center; background: #fafafa; border: 3px solid #d8d8d8; border-bottom-width: 3px; position: relative; }
.shelf.dark { border-color: #b9b9b9; margin-top: 12px; margin-bottom: 13px; height: 55px; }
.sh-l { width: 248px; height: 100%; flex: none; display: flex; align-items: center; gap: 16px; padding-left: 13px; border-right: 2px solid #d8d8d8; color: #444; }
.p1 { width: 296px; margin-left: 5px; padding-left: 22px; }
.p2 { width: 295px; margin-left: 4px; }
.plus { display: inline-block; width: 16px; height: 22px; border: 2px solid #fff; vertical-align: -3px; margin-right: 14px; position: relative; }
.plus::before { content: ""; position: absolute; left: 2px; top: 8px; width: 8px; height: 2px; background: #fff; }
.plus::after { content: ""; position: absolute; left: 5px; top: 5px; width: 2px; height: 8px; background: #fff; }
.sel { border: 3px solid #1f2d4d; line-height: 34px; width: 292px; padding-left: 17px; }
.tri-w { position: absolute; right: 22px; top: 12px; width: 0; height: 0; border-left: 6px solid transparent; border-right: 6px solid transparent; border-top: 9px solid #fff; }
.lower { flex: 1; min-height: 0; display: flex; gap: 13px; padding-bottom: 13px; }
.viz { width: 2275px; flex: none; background: #fff; border: 3px solid #d8d8d8; padding-left: 17px; }
.od { height: 56px; padding-top: 21px; width: 2236px; padding-left: 361px; text-align: center; line-height: 34px; font-size: 24px; color: #333; font-weight: 500; -webkit-text-stroke: .3px #333; }
.thead { display: grid; grid-template-columns: 161px 200px repeat(4, 469px); height: 122px; border-bottom: 2px solid #c8c8c8; width: 2236px; }
.th-l { display: flex; align-items: flex-end; padding-left: 13px; padding-bottom: 0; line-height: 33px; color: #333; font-weight: 500; font-size: 24.500px; -webkit-text-stroke: .3px #333; }
.th-l span { padding-bottom: 1px; }
.th-c { padding-left: 12px; }
.yr { border-left: 2px solid #d0d0d0; display: flex; flex-direction: column; justify-content: space-between; font-size: 25px; color: #777; }
.yr.last { border-right: 2px solid #d0d0d0; }
.yr b { font-weight: 500; color: #333; text-align: center; line-height: 44px; padding-top: 0; -webkit-text-stroke: .3px #333; }
.yh { display: grid; grid-template-columns: 1fr 1fr; align-items: end; text-align: center; line-height: 34px; }
.tbody { width: 2236px; height: 1569px; display: grid; grid-auto-rows: 1fr; }
.mo { display: grid; grid-template-columns: 161px 1fr; border-bottom: 3px solid #c8c8c8; min-height: 0; }
.mn { padding: 6px 0 0 13px; font-weight: 500; color: #333; font-size: 24.500px; -webkit-text-stroke: .3px #333; }
.rs { display: grid; grid-auto-rows: 1fr; min-height: 0; }
.r { display: grid; grid-template-columns: 200px repeat(4, 469px); min-height: 0; }
.cat { display: flex; align-items: center; padding-left: 12px; color: #666; font-size: 25px; padding-top: 3px; }
.cat.hl { background: #f5f5ab; color: #6f7052; }
.p { display: grid; grid-template-columns: 1fr 1fr; align-items: center; border-left: 2px solid #cfcfcf; font-size: 25px; }
.r .p:last-child { border-right: 2px solid #cfcfcf; }
.p span { text-align: right; padding-right: 10px; }
.t0 { background: #f4eddc; color: #cbcbcb; }
.t1 { background: #e5e9d7; color: #cacacc; }
.t2 { background: #d9e4d8; color: #eef2ee; }
.t3 { background: #d1e0d5; color: #eef2ee; }
.t4 { background: #cbd9cf; color: #eef2ee; }
.h0 { background: #f2cf66; color: #111; }
.h1 { background: #a6bf5c; color: #111; }
.h2 { background: #60a758; color: #fff; }
.h3 { background: #368a4d; color: #fff; }
.h4 { background: #146e39; color: #fff; }

/* legends */
.legends { width: 308px; flex: none; display: flex; flex-direction: column; gap: 14px; }
.lg1 { height: 141px; }
.lt { height: 56px; padding: 10px 0 0 11px; line-height: 36px; color: #444; }
.lb { background: #fff; height: 79px; padding: 8px 9px 0 9px; }
.ramp { height: 32px; display: flex; border: 3px solid #9a9a88; border-left-width: 2px; }
.ramp i { display: block; height: 100%; }
.r0 { width: 59px; background: #f2cf66; }
.r1 { width: 56px; background: #a6bf5c; }
.r2 { width: 56px; background: #60a758; }
.r3 { width: 56px; background: #368a4d; }
.r4 { flex: 1; background: #146e39; }
.rv { display: flex; justify-content: space-between; margin-top: 1px; font-size: 24px; color: #333; line-height: 36px; }
.lg2 { height: 114px; position: relative; }
.lg2 .lt { height: 62px; padding-top: 8px; }
.hinput { position: absolute; left: 5px; top: 62px; width: 291px; height: 39px; background: #fff; border: 2px solid #777; display: flex; align-items: center; justify-content: space-between; padding: 0 8px 0 16px; font-size: 21px; color: #333; }
.hinput mark { background: #c8c8c8; color: #333; padding: 3px 0; }
.x { font-size: 30px; color: #555; line-height: 1; }
.hdrop { position: absolute; left: 5px; top: 101px; width: 291px; height: 66px; background: #fff; border: 2px solid #cfcfcf; border-top: 0; border-bottom-width: 3px; padding-left: 23px; display: flex; align-items: center; color: #444; z-index: 1; }

/* sheet tabs */
.sheets { height: 60px; flex: none; display: flex; background: #e5e5e5; border-top: 2px solid #ccc; border-bottom: 3px solid #d0d0d0; font-size: 25px; color: #666; }
.st { display: flex; align-items: center; border-right: 2px solid #d4d4d4; padding: 2px 0 0 13px; white-space: nowrap; }
.st-ds { width: 262px; }
.cy2 { width: 18px; height: 28px; margin: 0 14px 0 4px; flex: none; }
.st-1 { width: 114px; }
.st-2 { width: 214px; }
.st-3 { width: 257px; background: #f8f8f8; color: #444; font-weight: 700; font-size: 26px; }
.st-i { width: 63px; padding-left: 14px; }

/* status */
.status { height: 42px; flex: none; display: flex; align-items: center; background: #ebebeb; font-size: 21.500px; color: #333; padding-left: 24px; }
.s1 { width: 133px; }
.s2 { width: 231px; }
.spc { flex: 1; }
.sb { align-self: stretch; flex: none; border-left: 2px solid #d0d0d0; display: flex; align-items: center; }
.w255 { width: 255px; }
.w54 { width: 54px; }
.w94 { width: 94px; }
.w142 { width: 142px; padding-left: 16px; }
.vw { width: 153px; padding-left: 17px; }

/* annotations laid over the screenshot */
.note { position: absolute; color: #ef5a4c; white-space: nowrap; font-family: "Lato", sans-serif; line-height: 1; -webkit-text-stroke: 2px #ef5a4c; }
.n-sheet { left: 2606px; top: 22px; font-size: 107px; }
.n-high { left: 1694px; top: 132px; font-size: 107px; }
.tooltip { position: absolute; left: 1562px; top: 197px; width: 110px; height: 39px; background: #ffffc8; border: 1px solid #ddd; box-shadow: 0 10px 24px rgba(0,0,0,.28); font-size: 23px; line-height: 38px; padding-left: 6px; color: #222; }
.redbox { position: absolute; left: 1537px; top: 141px; width: 77px; height: 81px; border: 14px solid #ee4026; }
.arrow { position: absolute; left: 1600px; top: 190px; pointer-events: none; }
```
